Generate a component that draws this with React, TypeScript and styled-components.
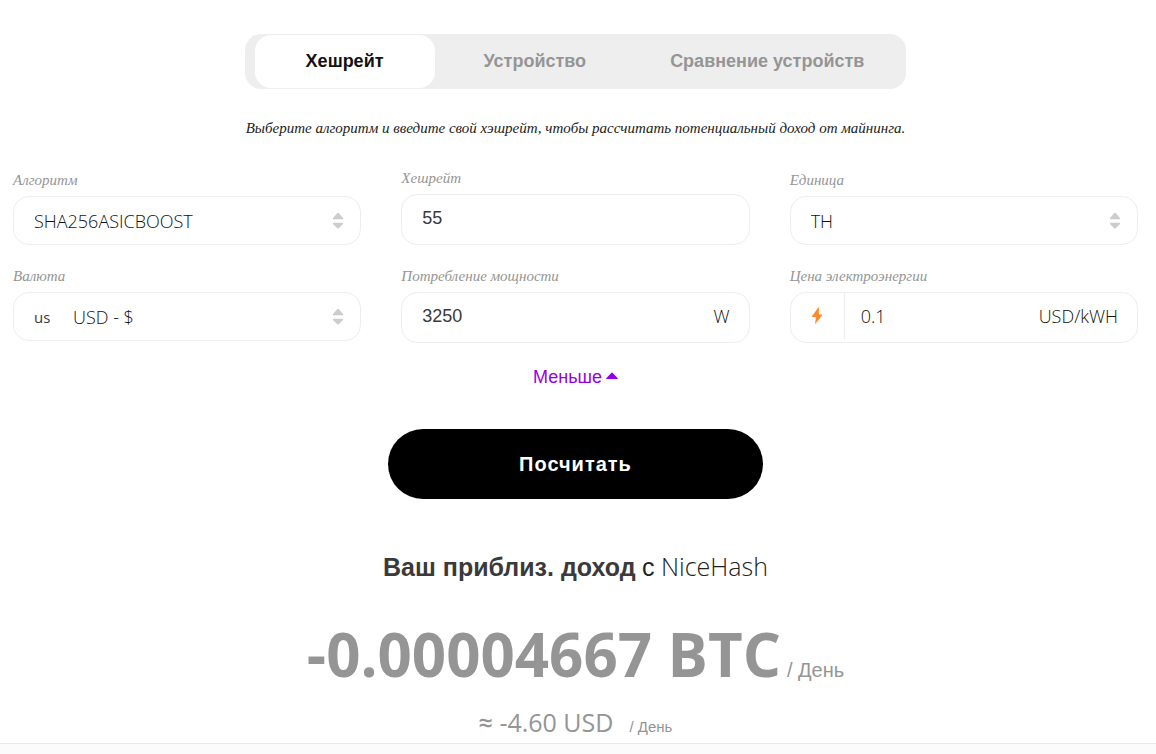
import React, { useState } from "react";
import styled, { createGlobalStyle } from "styled-components";

const GlobalStyle = createGlobalStyle`
  *, *::before, *::after { box-sizing: border-box; }
  body {
    margin: 0;
    background: #fff;
    color: #3a3a3a;
    font-family: "Open Sans", "Liberation Sans", sans-serif;
  }
  button, input, select { font: inherit; color: inherit; margin: 0; }
`;

const cyrillic = `"Liberation Sans", Arial, sans-serif`;
const serif = `"Liberation Serif", "Times New Roman", serif`;

const Page = styled.main`
  display: flex;
  flex-direction: column;
  align-items: center;
  padding: 34px 18px 3px 13px;
`;

const Tabs = styled.div`
  display: flex;
  padding: 1px 0 1px 10px;
  border-radius: 16px;
  background: #eee;
`;

const Tab = styled.button<{ $active: boolean }>`
  height: 53px;
  padding: 0 ${(p) => (p.$active ? 51 : 42)}px 2px;
  margin-right: ${(p) => (p.$active ? 7 : 0)}px;
  border: 0;
  border-radius: 16px;
  background: ${(p) => (p.$active ? "#fff" : "transparent")};
  color: ${(p) => (p.$active ? "#111" : "#959595")};
  font: bold 18px/24px ${cyrillic};
  cursor: pointer;
`;

const Intro = styled.p`
  margin: 29px 0 30px;
  color: #222;
  font: italic 15px/20px ${serif};
`;

const Form = styled.form`
  display: flex;
  flex-direction: column;
  align-items: center;
  width: 100%;
`;

const Row = styled.div<{ $align: string }>`
  display: grid;
  grid-template-columns: repeat(3, minmax(0, 1fr));
  align-items: ${(p) => p.$align};
  gap: 40px;
  width: 100%;
  margin-bottom: 21px;
`;

const Field = styled.div`
  display: flex;
  flex-direction: column;
`;

const Label = styled.label`
  margin-bottom: 6px;
  color: #959595;
  font: italic 15px/20px ${serif};
`;

const Box = styled.div`
  display: flex;
  align-items: center;
  border: 1px solid #eee;
  border-radius: 16px;
  color: #111;
  font-size: 18px;
  font-weight: 300;
  line-height: 24px;
`;

const SelectBox = styled(Box)`
  height: 49px;
  padding: 0 16px 0 20px;
`;

const InputBox = styled(Box)`
  height: 51px;
  padding: 0 19px 3px 20px;
`;

const Select = styled.select`
  flex: 1;
  min-width: 0;
  padding: 0;
  border: 0;
  outline: 0;
  background: transparent;
  appearance: none;
`;

const Input = styled.input`
  flex: 1;
  min-width: 0;
  padding: 0;
  border: 0;
  outline: 0;
  background: transparent;
`;

const NumberInput = styled(Input)`
  color: #3a3a3a;
  font-family: ${cyrillic};
`;

const CountryCode = styled.span`
  width: 39px;
  color: #3a3a3a;
  font-size: 15px;
  font-weight: 400;
`;

const BoltCell = styled.span`
  display: flex;
  align-items: center;
  justify-content: center;
  align-self: stretch;
  width: 54px;
  margin: 0 16px 0 -20px;
  border-right: 1px solid #eee;
`;

const LessButton = styled.button`
  display: flex;
  align-items: center;
  gap: 4px;
  margin-top: 1px;
  padding: 0;
  border: 0;
  background: none;
  color: #9500e4;
  font: 18px/24px ${cyrillic};
  cursor: pointer;
`;

const Caret = styled.svg`
  margin-bottom: 4px;
`;

const Submit = styled.button`
  width: 375px;
  max-width: 100%;
  height: 70px;
  margin-top: 40px;
  border: 0;
  border-radius: 35px;
  background: #000;
  color: #fff;
  font: bold 20px/28px ${cyrillic};
  letter-spacing: 1px;
  cursor: pointer;
`;

const Title = styled.h2`
  margin: 47px 0 0;
  color: #222;
  font-size: 25px;
  line-height: 40px;
  font-weight: 300;
`;

const Strong = styled.strong`
  color: #3a3a3a;
  font-family: ${cyrillic};
  font-weight: 700;
`;

const Cyr = styled.span`
  font-family: ${cyrillic};
`;

const Income = styled.p`
  margin: 23px 0 0;
  color: #959595;
  font-size: 60px;
  line-height: 88px;
  font-weight: 700;
`;

const Per = styled.span<{ $size: number; $gap: number }>`
  margin-left: ${(p) => p.$gap}px;
  font: ${(p) => p.$size}px ${cyrillic};
`;

const Approx = styled.span`
  font-weight: 600;
`;

const Fiat = styled.p`
  margin: 6px 0 0;
  color: #959595;
  font-size: 25px;
  line-height: 36px;
`;

const Footer = styled.footer`
  height: 11px;
  border-top: 1px solid #e9e9e9;
  background: #fbfbfb;
`;

const Sorter = () => (
  <svg width="12" height="18" viewBox="0 0 12 18" fill="#ccc" aria-hidden="true">
    <path d="M1.6 7.2Q.4 7.2 1 6.1L5.2 1.2Q6 .5 6.8 1.2L11 6.1Q11.6 7.2 10.4 7.2Z" />
    <path d="M1.6 10.8Q.4 10.8 1 11.9L5.2 16.2Q6 16.9 6.8 16.2L11 11.9Q11.6 10.8 10.4 10.8Z" />
  </svg>
);

const Bolt = () => (
  <svg width="12" height="18" viewBox="0 0 12 18" fill="#ff8a2b" aria-hidden="true">
    <path d="M7.3.6 1 9.3q-.4.8.5.8H5L4 17.3 11 8.4q.5-.9-.5-.9H7.8L8 .8Q7.8.1 7.3.6Z" />
  </svg>
);

const tabs = ["Хешрейт", "Устройство", "Сравнение устройств"];

export default function App() {
  const [active, setActive] = useState(0);
  const [hashrate, setHashrate] = useState("55");
  const [power, setPower] = useState("3250");
  const [price, setPrice] = useState("0.1");

  return (
    <>
      <GlobalStyle />
      <Page>
        <Tabs role="tablist">
          {tabs.map((name, i) => (
            <Tab key={name} type="button" role="tab" aria-selected={i === active} $active={i === active} onClick={() => setActive(i)}>
              {name}
            </Tab>
          ))}
        </Tabs>
        <Intro>Выберите алгоритм и введите свой хэшрейт, чтобы рассчитать потенциальный доход от майнинга.</Intro>

        <Form onSubmit={(e) => e.preventDefault()}>
          <Row $align="end">
            <Field>
              <Label htmlFor="algorithm">Алгоритм</Label>
              <SelectBox>
                <Select id="algorithm"><option>SHA256ASICBOOST</option></Select>
                <Sorter />
              </SelectBox>
            </Field>
            <Field>
              <Label htmlFor="hashrate">Хешрейт</Label>
              <InputBox>
                <NumberInput id="hashrate" value={hashrate} onChange={(e) => setHashrate(e.target.value)} />
              </InputBox>
            </Field>
            <Field>
              <Label htmlFor="unit">Единица</Label>
              <SelectBox>
                <Select id="unit"><option>TH</option></Select>
                <Sorter />
              </SelectBox>
            </Field>
          </Row>
          <Row $align="start">
            <Field>
              <Label htmlFor="currency">Валюта</Label>
              <SelectBox>
                <CountryCode>us</CountryCode>
                <Select id="currency"><option>USD - $</option></Select>
                <Sorter />
              </SelectBox>
            </Field>
            <Field>
              <Label htmlFor="power">Потребление мощности</Label>
              <InputBox>
                <NumberInput id="power" value={power} onChange={(e) => setPower(e.target.value)} />
                <span>W</span>
              </InputBox>
            </Field>
            <Field>
              <Label htmlFor="price">Цена электроэнергии</Label>
              <InputBox>
                <BoltCell><Bolt /></BoltCell>
                <Input id="price" value={price} onChange={(e) => setPrice(e.target.value)} />
                <span>USD/kWH</span>
              </InputBox>
            </Field>
          </Row>
          <LessButton type="button">
            Меньше
            <Caret width="12" height="7" viewBox="0 0 12 7" fill="currentColor" aria-hidden="true">
              <path d="M.6 7Q-.3 7 .5 6L5.2.9Q6 .2 6.8.9L11.5 6Q12.3 7 11.4 7Z" />
            </Caret>
          </LessButton>
          <Submit type="submit">Посчитать</Submit>
        </Form>

        <Title><Strong>Ваш приблиз. доход</Strong> <Cyr>с</Cyr> NiceHash</Title>
        <Income>-0.00004667 BTC<Per $size={20} $gap={6}>/ День</Per></Income>
        <Fiat><Approx>≈</Approx> -4.60 USD<Per $size={15} $gap={16}>/ День</Per></Fiat>
      </Page>
      <Footer />
    </>
  );
}
